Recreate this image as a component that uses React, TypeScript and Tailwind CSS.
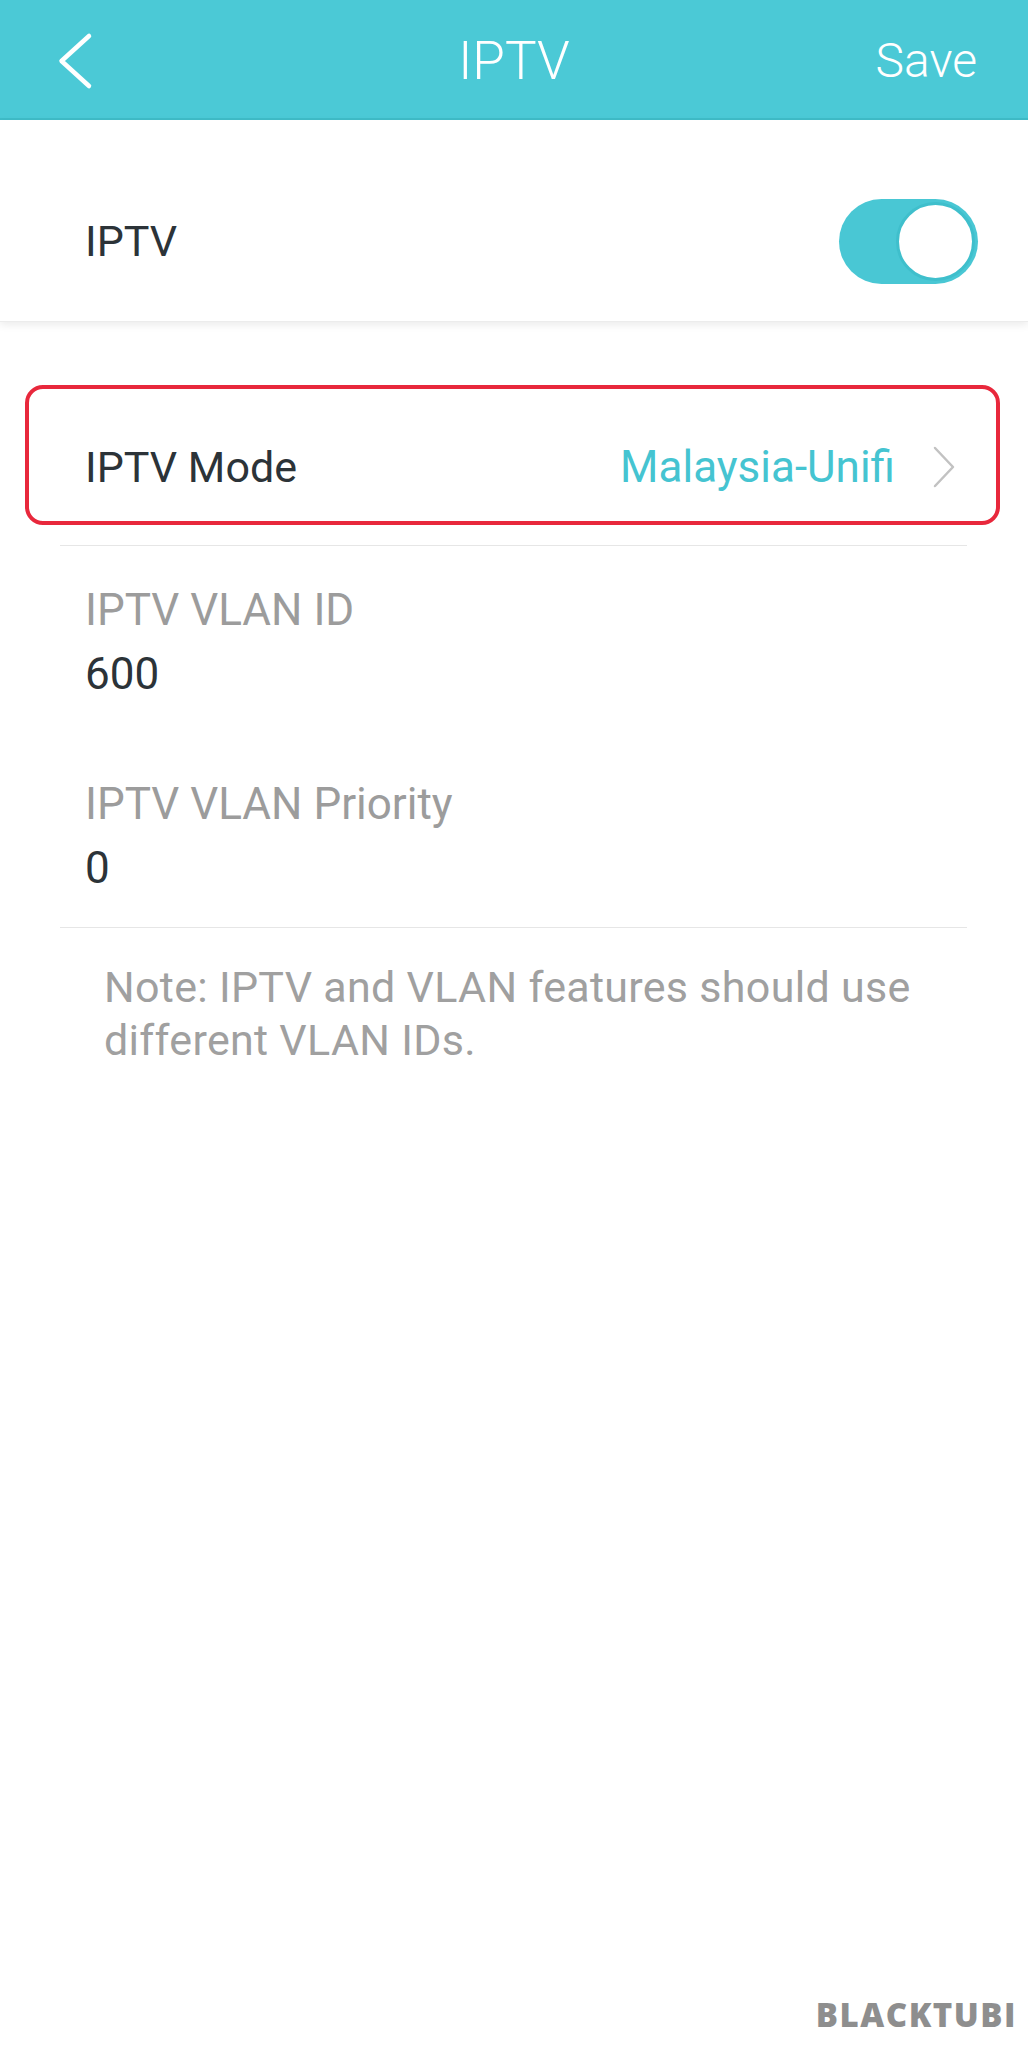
import React from 'react'

function BackIcon() {
  return (
    <svg width="40" height="60" viewBox="0 0 40 60" fill="none">
      <polyline points="33,5 5.5,30 33,55" stroke="#ffffff" strokeWidth="4.5" strokeLinecap="round" strokeLinejoin="round" />
    </svg>
  )
}

function ChevronRight() {
  return (
    <svg width="24" height="44" viewBox="0 0 24 44" fill="none">
      <polyline points="3,3 21,22 3,41" stroke="#c2c2c2" strokeWidth="2.5" strokeLinecap="round" strokeLinejoin="round" />
    </svg>
  )
}

function Toggle({ on }: { on: boolean }) {
  return (
    <div className={`flex h-[85px] w-[139px] items-center rounded-full p-[3px] ${on ? 'justify-end bg-[#49c7d4]' : 'justify-start bg-[#e5e5e5]'}`}>
      <div className="h-[79px] w-[79px] rounded-full border-[3px] border-[#3fbfcc] bg-white" />
    </div>
  )
}

function Field({ label, value, gapTop }: { label: string; value: string; gapTop: string }) {
  return (
    <div className={`pl-[85px] ${gapTop}`}>
      <div className="h-[60px] text-[44px] leading-[60px] text-[#9c9c9c]">{label}</div>
      <div className="mt-[4px] h-[60px] text-[44px] leading-[60px] text-[#2c3338]">{value}</div>
    </div>
  )
}

export default function App() {
  return (
    <div className="flex min-h-[2048px] flex-col bg-white font-['Roboto',sans-serif]">
      <header className="grid h-[120px] grid-cols-[1fr_auto_1fr] items-center border-b-[2px] border-[#3fbcc8] bg-[#4bc9d6] pt-[4px] text-white">
        <div className="pl-[56px]">
          <BackIcon />
        </div>
        <h1 className="text-[53px] font-light leading-none">IPTV</h1>
        <div className="pr-[51px] text-right text-[48px] font-light leading-none">Save</div>
      </header>

      <div className="flex h-[202px] items-center justify-between border-b border-[#ececec] bg-white pl-[85px] pr-[50px] pt-[42px] shadow-[0_3px_8px_rgba(0,0,0,0.08)]">
        <span className="text-[43px] text-[#2c3338]">IPTV</span>
        <Toggle on />
      </div>

      <div className="ml-[25px] mr-[28px] mt-[63px] flex h-[140px] items-center justify-between rounded-[18px] border-[4px] border-[#e8283c] pl-[56px] pr-[40px] pt-[24px]">
        <span className="text-[43px] text-[#2c3338]">IPTV Mode</span>
        <div className="flex items-center gap-[37px]">
          <span className="text-[44px] text-[#45c4d1]">Malaysia-Unifi</span>
          <ChevronRight />
        </div>
      </div>

      <div className="ml-[60px] mr-[61px] mt-[20px] h-px bg-[#e6e6e6]" />

      <Field label="IPTV VLAN ID" value="600" gapTop="mt-[34px]" />
      <Field label="IPTV VLAN Priority" value="0" gapTop="mt-[70px]" />

      <div className="ml-[60px] mr-[61px] mt-[29px] h-px bg-[#e6e6e6]" />

      <p className="mt-[33px] w-[930px] pl-[104px] text-[43px] leading-[53px] tracking-[0.3px] text-[#a0a0a0]">
        Note: IPTV and VLAN features should use different VLAN IDs.
      </p>

      <div className="mt-auto flex justify-end pb-[17px] pr-[11px]">
        <span className="font-['Open_Sans',sans-serif] text-[33px] font-extrabold leading-[33px] tracking-[1.5px] text-[#8e8e8e]">BLACKTUBI</span>
      </div>
    </div>
  )
}
